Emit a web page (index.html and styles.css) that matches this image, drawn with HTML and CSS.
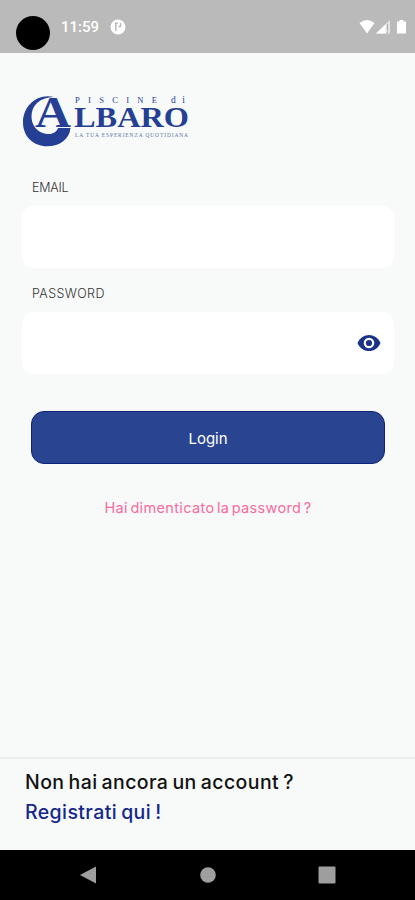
FILE: index.html
```html
<!DOCTYPE html>
<html lang="it">
<head>
  <meta charset="UTF-8" />
  <meta name="viewport" content="width=device-width, initial-scale=1.0"/>
  <title>Piscine di Albaro - Login</title>
  <link rel="stylesheet" href="styles.css">
</head>
<body>
  <div class="status-bar">
    <span class="camera"></span>
    <span class="clock">11:59</span>
    <svg class="app-icon" width="16" height="16" viewBox="0 0 16 16">
      <circle cx="8" cy="8" r="7.5" fill="#fff"/>
      <path d="M5.8 4v8M5.5 4.2H8M10.5 4v3.5H8.5" fill="none" stroke="#bababa" stroke-width="1.5"/>
    </svg>
    <svg class="signals" width="48" height="16" viewBox="0 0 48 16">
      <path d="M0.5 4Q8-2 15.5 4L8 14.5z" fill="#fff"/>
      <path d="M17 14.5L31 1v13.5z" fill="#e4e4e4"/>
      <path d="M17 14.5L26.5 5.3v9.2z" fill="#fff"/>
      <path d="M28.5 5v6.5M28.5 12.5v1.5" stroke="#aaa" stroke-width="1"/>
      <path d="M38 2.5h2.5V1h4v1.5H47v12h-9z" fill="#fff"/>
    </svg>
  </div>

  <main>
    <svg class="logo" width="170" height="54" viewBox="0 0 170 54" role="img" aria-label="Piscine di Albaro">
      <path d="M32 4C15 0 1 13 1 29.5C1 44 12 53.3 25 53.3C38 53.3 47.5 46 48.5 35H36C35 39 30 41.5 25 41C15 40 9.5 32 9.5 23.5C9.5 13 17 4.5 32 4z" fill="#243f94"/>
      <g fill="#243f94" font-family="Liberation Serif, serif">
        <text class="big" x="13" y="33.5" font-size="44" textLength="36" lengthAdjust="spacingAndGlyphs">A</text>
        <text class="big" x="52" y="33.5" font-size="30" textLength="115" lengthAdjust="spacingAndGlyphs">LBARO</text>
        <text x="53" y="10" font-size="8.5" textLength="82">PISCINE</text>
        <text x="149" y="10" font-size="9.5" textLength="14">di</text>
        <text x="53" y="43.5" font-size="5.4" textLength="113" opacity="0.75">LA TUA ESPERIENZA QUOTIDIANA</text>
      </g>
    </svg>

    <form>
      <label for="email">EMAIL</label>
      <div class="field">
        <input type="text" id="email">
      </div>
      <label for="password" class="wide">PASSWORD</label>
      <div class="field">
        <input type="password" id="password">
        <svg width="24" height="18" viewBox="0 0 24 18">
          <path d="M0.5 9C5-1.8 19-1.8 23.5 9C19 19.8 5 19.8 0.5 9z" fill="#183388"/>
          <circle cx="12" cy="9" r="5.3" fill="#fff"/>
          <circle cx="12" cy="9" r="3.1" fill="#183388"/>
        </svg>
      </div>
      <button type="button" class="login">Login</button>
      <a class="forgot"><span>Hai dimenticato la password ?</span></a>
    </form>
  </main>

  <footer>
    <p class="question">Non hai ancora un account ?</p>
    <a class="register">Registrati qui !</a>
  </footer>

  <nav class="nav-bar">
    <svg width="18" height="18" viewBox="0 0 18 18"><path d="M1 9L17 0.5v17z"/></svg>
    <svg width="18" height="18" viewBox="0 0 18 18"><circle cx="9" cy="9" r="7.8"/></svg>
    <svg width="18" height="18" viewBox="0 0 18 18"><rect x="0.5" y="0.5" width="17" height="17" rx="1"/></svg>
  </nav>
</body>
</html>
```

FILE: styles.css
```css
* {
  box-sizing: border-box;
}

body {
  margin: 0;
  height: 900px;
  display: flex;
  flex-direction: column;
  overflow: hidden;
  background: #f8faf9;
  font-family: Inter, "Open Sans", sans-serif;
}

.status-bar {
  height: 53px;
  flex: none;
  display: flex;
  align-items: center;
  padding: 1px 8px 0 16px;
  background: #bababa;
  color: #fff;
}

.camera {
  width: 34px;
  height: 34px;
  margin-top: 11px;
  border-radius: 50%;
  background: #000;
}

.clock {
  margin-left: 11px;
  font: 500 15px Roboto, sans-serif;
}

.app-icon {
  margin-left: 11px;
}

.signals {
  margin-left: auto;
}

main {
  flex: 1;
  padding: 40px 21px 0 22px;
}

.logo {
  display: block;
  overflow: visible;
}

.big {
  font-weight: bold;
}

form {
  display: flex;
  flex-direction: column;
  padding-top: 32px;
}

label {
  height: 27px;
  padding-left: 10px;
  font-size: 12.5px;
  font-weight: 300;
  line-height: 17px;
  letter-spacing: -0.2px;
  color: #333;
}

.wide {
  letter-spacing: 0.4px;
}

.field {
  display: flex;
  align-items: center;
  height: 62px;
  margin-bottom: 17px;
  padding-right: 13px;
  border-radius: 12px;
  background: #fff;
}

input {
  flex: 1;
  min-width: 0;
  height: 100%;
  padding: 0 16px;
  border: none;
  outline: none;
  background: transparent;
  font-size: 15px;
}

.login {
  height: 53px;
  margin: 20px 9px 0;
  padding-top: 3px;
  border: 1px solid #0c237c;
  border-radius: 13px;
  background: #294491;
  color: #fff;
  font-family: inherit;
  font-size: 15px;
}

.forgot {
  margin-top: 34px;
  font-size: 14.5px;
  line-height: 20px;
  text-align: center;
  letter-spacing: 0.35px;
  word-spacing: -2px;
  color: #f76b9f;
}

footer {
  height: 93px;
  flex: none;
  padding: 8px 25px;
  border-top: 2px solid #eceeed;
  font-size: 19.5px;
  font-weight: 500;
  line-height: 30px;
  letter-spacing: 0.4px;
  word-spacing: -1.5px;
}

.question {
  margin: 0;
  color: #111;
}

.register {
  color: #14278a;
}

.nav-bar {
  height: 50px;
  flex: none;
  display: flex;
  justify-content: space-between;
  align-items: center;
  padding: 0 79px;
  background: #000;
  fill: #9e9e9e;
}
```
